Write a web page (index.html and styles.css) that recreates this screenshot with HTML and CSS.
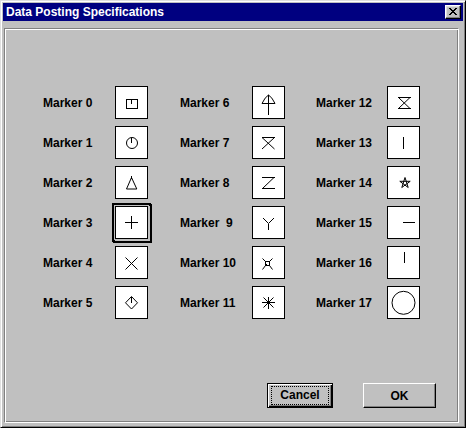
FILE: index.html
```html
<!DOCTYPE html>
<html lang="en">
<head>
    <meta charset="UTF-8">
    <title>Data Posting Specifications</title>
    <link rel="stylesheet" href="styles.css">
</head>
<body>
    <div class="window">
        <div class="titlebar">
            <span class="title">Data Posting Specifications</span>
            <button class="close" type="button" aria-label="Close">
                <svg width="8" height="7" viewBox="0 0 8 7">
                    <path d="M0 0h2v1h-2zM6 0h2v1h-2zM1 1h2v1h-2zM5 1h2v1h-2zM2 2h4v1h-4zM3 3h2v1h-2zM2 4h4v1h-4zM1 5h2v1h-2zM5 5h2v1h-2zM0 6h2v1h-2zM6 6h2v1h-2z" fill="#000"/>
                </svg>
            </button>
        </div>

        <div class="panel">
            <div class="markers">
                <!-- column 1 -->
                <div class="item"><span class="label">Marker 0</span>
                    <div class="box"><svg viewBox="1 1 31 31"><g class="ln"><rect x="11.5" y="13.5" width="11" height="9"/><path d="M16.5 13.5V18"/></g></svg></div></div>
                <div class="item"><span class="label">Marker 1</span>
                    <div class="box"><svg viewBox="1 1 31 31"><circle class="cv" cx="17" cy="17" r="5.5"/><path class="ln" d="M16.5 11.5V17"/></svg></div></div>
                <div class="item"><span class="label">Marker 2</span>
                    <div class="box"><svg viewBox="1 1 31 31"><polygon class="cv" points="16.5,11.5 11.5,23 21.8,23"/><path class="ln" d="M16.5 9.5V13"/></svg></div></div>
                <div class="item"><span class="label">Marker 3</span>
                    <div class="box selected"><svg viewBox="1 1 31 31"><path class="ln" d="M10 16.5H23M16.5 10V23"/></svg></div></div>
                <div class="item"><span class="label">Marker 4</span>
                    <div class="box"><svg viewBox="1 1 31 31"><path class="cv" d="M10.5 11.5L22.5 23.5M22.5 11.5L10.5 23.5"/></svg></div></div>
                <div class="item"><span class="label">Marker 5</span>
                    <div class="box"><svg viewBox="1 1 31 31"><polygon class="cv" points="16.5,10.5 22.5,16.8 16.5,23 10.5,16.8"/><path class="ln" d="M16.5 10.5V16.5"/></svg></div></div>

                <!-- column 2 -->
                <div class="item"><span class="label">Marker 6</span>
                    <div class="box"><svg viewBox="1 1 31 31"><path class="ln" d="M16.5 9V28.5M10 17.5H23"/><path class="cv" d="M10 17.5Q13 11 16.5 9Q20 11 23 17.5"/></svg></div></div>
                <div class="item"><span class="label">Marker 7</span>
                    <div class="box"><svg viewBox="1 1 31 31"><path class="ln" d="M10 11.5H23"/><path class="cv" d="M10 11.5L22.5 23M22.5 11.5L10 23"/></svg></div></div>
                <div class="item"><span class="label">Marker 8</span>
                    <div class="box"><svg viewBox="1 1 31 31"><path class="ln" d="M10 11.5H22.5M10 22.5H23"/><path class="cv" d="M22 11.5L10.5 22.5"/></svg></div></div>
                <div class="item"><span class="label">Marker&nbsp; 9</span>
                    <div class="box"><svg viewBox="1 1 31 31"><path class="cv" d="M11 12L16.5 17.5L22 12"/><path class="ln" d="M16.5 17.5V23.5"/></svg></div></div>
                <div class="item"><span class="label">Marker 10</span>
                    <div class="box"><svg viewBox="1 1 31 31"><rect class="ln" x="13.5" y="15.5" width="4" height="4"/><path class="cv" d="M13.5 15.5L10.5 12.5M17.5 15.5L20.5 12.5M13.5 19.5L10.5 23.5M17.5 19.5L20.5 23.5"/><rect x="14" y="18" width="1" height="1" fill="#000"/></svg></div></div>
                <div class="item"><span class="label">Marker 11</span>
                    <div class="box"><svg viewBox="1 1 31 31"><path class="ln" d="M10 16.5H23M16.5 10.5V23"/><path class="cv" d="M11.5 11.5L21.5 21.5M21.5 11.5L11.5 21.5"/></svg></div></div>

                <!-- column 3 -->
                <div class="item"><span class="label">Marker 12</span>
                    <div class="box"><svg viewBox="1 1 31 31"><path class="ln" d="M11 11.5H24M11 22.5H24"/><path class="cv" d="M11.5 11.5L23 22.5M23 11.5L11.5 22.5"/></svg></div></div>
                <div class="item"><span class="label">Marker 13</span>
                    <div class="box"><svg viewBox="1 1 31 31"><path class="ln" d="M16.5 11V23"/></svg></div></div>
                <div class="item"><span class="label">Marker 14</span>
                    <div class="box"><svg viewBox="1 1 31 31"><polygon class="cv" points="18,11.5 21.2,21.5 12.8,15.3 23.2,15.3 14.8,21.5"/></svg></div></div>
                <div class="item"><span class="label">Marker 15</span>
                    <div class="box"><svg viewBox="1 1 31 31"><path class="ln" d="M15.5 16.5H28"/></svg></div></div>
                <div class="item"><span class="label">Marker 16</span>
                    <div class="box"><svg viewBox="1 1 31 31"><path class="ln" d="M17.5 5.5V17"/></svg></div></div>
                <div class="item"><span class="label">Marker 17</span>
                    <div class="box"><svg viewBox="1 1 31 31"><circle class="cv" cx="16.5" cy="16.8" r="11.5"/></svg></div></div>
            </div>

            <div class="footer">
                <button class="btn default" type="button"><span class="focus">Cancel</span></button>
                <button class="btn" type="button">OK</button>
            </div>
        </div>
    </div>
</body>
</html>
```

FILE: styles.css
```css
body {
    margin: 0;
    background-color: #c0c0c0;
    font-family: 'Liberation Sans', Arial, sans-serif;
    font-size: 12px;
    font-weight: bold;
    color: #000;
}
.window {
    width: 466px;
    height: 428px;
    box-sizing: border-box;
    padding: 2px;
    background-color: #c0c0c0;
    border: 1px solid;
    border-color: #dfdfdf #000 #000 #dfdfdf;
    box-shadow: inset 1px 1px #fff, inset -1px -1px #808080;
    display: flex;
    flex-direction: column;
}
.titlebar {
    height: 18px;
    flex: none;
    background-color: #000080;
    color: #fff;
    display: flex;
    align-items: center;
    justify-content: space-between;
    padding: 0 2px 0 3px;
}
.title {
    line-height: 18px;
}
.close {
    width: 16px;
    height: 14px;
    padding: 0;
    margin: 0;
    background-color: #c0c0c0;
    border: 1px solid;
    border-color: #fff #000 #000 #fff;
    box-shadow: inset -1px -1px #808080, inset 1px 1px #dfdfdf;
    display: flex;
    align-items: flex-start;
    justify-content: flex-start;
}
.close svg {
    display: block;
    margin: 2px 0 0 3px;
}
.panel {
    flex: 1;
    margin: 7px 4px 2px 1px;
    border: 1px solid;
    border-color: #808080 #fff #fff #808080;
    box-shadow: inset 1px 1px #fff, inset -1px -1px #808080;
    padding: 57px 22px 0 38px;
    display: flex;
    flex-direction: column;
}
.markers {
    display: grid;
    grid-template-columns: 137px 136px 104px;
    grid-template-rows: repeat(6, 33px);
    grid-auto-flow: column;
    row-gap: 7px;
}
.item {
    display: flex;
    align-items: center;
}
.label {
    width: 72px;
    white-space: pre;
}
.markers .item:nth-child(n+13) .label {
    width: 71px;
}
.box {
    width: 33px;
    height: 33px;
    box-sizing: border-box;
    border: 1px solid #000;
    background-color: #fff;
}
.box svg {
    display: block;
    width: 31px;
    height: 31px;
}
.box.selected {
    box-shadow: 0 0 0 1px #c0c0c0, 1px 1px 0 1px #c0c0c0, 0 0 0 3px #000, 1px 1px 0 3px #000;
}
.ln {
    fill: none;
    stroke: #000;
    stroke-width: 1;
    shape-rendering: crispEdges;
}
.cv {
    fill: none;
    stroke: #000;
    stroke-width: 1;
}
.footer {
    margin-top: 64px;
    display: flex;
    justify-content: flex-end;
    gap: 30px;
}
.btn {
    height: 25px;
    width: 73px;
    padding: 0;
    margin: 0;
    font: inherit;
    color: #000;
    background-color: #c0c0c0;
    border: 1px solid;
    border-color: #fff #000 #000 #fff;
    box-shadow: inset -1px -1px #808080;
    display: flex;
    align-items: center;
    justify-content: center;
}
.btn.default {
    width: 66px;
    border-color: #000;
    box-shadow: inset 1px 1px #fff, inset -1px -1px #000, inset -2px -2px #808080;
}
.focus {
    width: 58px;
    height: 19px;
    box-sizing: border-box;
    border: 1px dotted #000;
    display: flex;
    align-items: center;
    justify-content: center;
    margin-bottom: 1px;
}
```
